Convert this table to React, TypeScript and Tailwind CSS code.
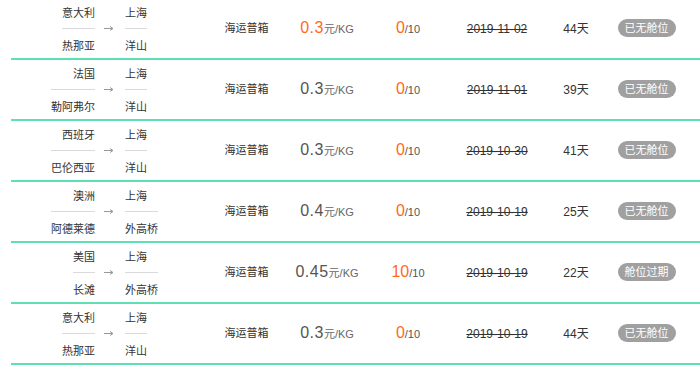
import React from "react";

type Row = {
  from: [string, string];
  to: [string, string];
  price: string;
  priceHot?: boolean;
  count: string;
  date: string;
  days: string;
  status: string;
};

const rows: Row[] = [
  { from: ["意大利", "热那亚"], to: ["上海", "洋山"], price: "0.3", priceHot: true, count: "0", date: "2019-11-02", days: "44", status: "已无舱位" },
  { from: ["法国", "勒阿弗尔"], to: ["上海", "洋山"], price: "0.3", count: "0", date: "2019-11-01", days: "39", status: "已无舱位" },
  { from: ["西班牙", "巴伦西亚"], to: ["上海", "洋山"], price: "0.3", count: "0", date: "2019-10-30", days: "41", status: "已无舱位" },
  { from: ["澳洲", "阿德莱德"], to: ["上海", "外高桥"], price: "0.4", count: "0", date: "2019-10-19", days: "25", status: "已无舱位" },
  { from: ["美国", "长滩"], to: ["上海", "外高桥"], price: "0.45", count: "10", date: "2019-10-19", days: "22", status: "舱位过期" },
  { from: ["意大利", "热那亚"], to: ["上海", "洋山"], price: "0.3", count: "0", date: "2019-10-19", days: "44", status: "已无舱位" },
];

const font = { fontFamily: '"Liberation Sans", "Noto Sans CJK SC", sans-serif' };

function Stack({ items, align }: { items: [string, string]; align: "end" | "start" }) {
  return (
    <div className={`inline-flex flex-col pt-[4px] ${align === "end" ? "items-end" : "items-start"}`}>
      <div className="h-[20px] leading-[20px] text-[11px] text-[#333] whitespace-nowrap">{items[0]}</div>
      <div className="mt-[5px] h-px w-full bg-[#dadada]" />
      <div className="mt-[7px] h-[20px] leading-[20px] text-[11px] text-[#333] whitespace-nowrap">{items[1]}</div>
    </div>
  );
}

function Arrow() {
  return (
    <svg width="10" height="5" viewBox="0 0 10 5" className="block">
      <line x1="0" y1="2.5" x2="9" y2="2.5" stroke="#999" strokeWidth="1" />
      <polyline points="6,0.5 9,2.5 6,4.5" fill="none" stroke="#999" strokeWidth="1" />
    </svg>
  );
}

export default function App() {
  return (
    <div className="w-[700px] h-[366px] overflow-hidden bg-white" style={font}>
      <div className="mt-[-1px] ml-[11px] w-[689px]">
        {rows.map((r, i) => (
          <div key={i} className="flex h-[61px] border-b-2 border-[#5ee0b4]">
            <div className="w-[84px] flex justify-end">
              <Stack items={r.from} align="end" />
            </div>
            <div className="w-[27px] flex items-center justify-center">
              <Arrow />
            </div>
            <div className="w-[78px] pl-[3px] flex justify-start">
              <Stack items={r.to} align="start" />
            </div>
            <div className="w-[93px] flex items-center justify-center text-[11px] text-[#333]">海运普箱</div>
            <div className="w-[68px] flex items-center justify-center">
              <div className="flex items-baseline whitespace-nowrap leading-[20px]">
                <span className={`text-[16px] tracking-[0.5px] ${r.priceHot ? "text-[#ff6a1a]" : "text-[#555]"}`}>{r.price}</span>
                <span className="text-[11px] text-[#666]">元/KG</span>
              </div>
            </div>
            <div className="w-[94px] flex items-center justify-center">
              <div className="flex items-baseline whitespace-nowrap leading-[20px]">
                <span className="text-[16px] text-[#ff6a1a]">{r.count}</span>
                <span className="text-[11px] text-[#555]">/10</span>
              </div>
            </div>
            <div className="w-[84px] flex items-center justify-center text-[12px] text-[#333] line-through">{r.date}</div>
            <div className="w-[74px] flex items-center justify-center text-[12px] text-[#333]">{r.days}天</div>
            <div className="w-[67px] flex items-center justify-center">
              <span className="h-[18px] leading-[18px] px-[7px] rounded-full bg-[#a0a0a0] text-white text-[11px] whitespace-nowrap mt-[-2px]">{r.status}</span>
            </div>
          </div>
        ))}
      </div>
    </div>
  );
}
